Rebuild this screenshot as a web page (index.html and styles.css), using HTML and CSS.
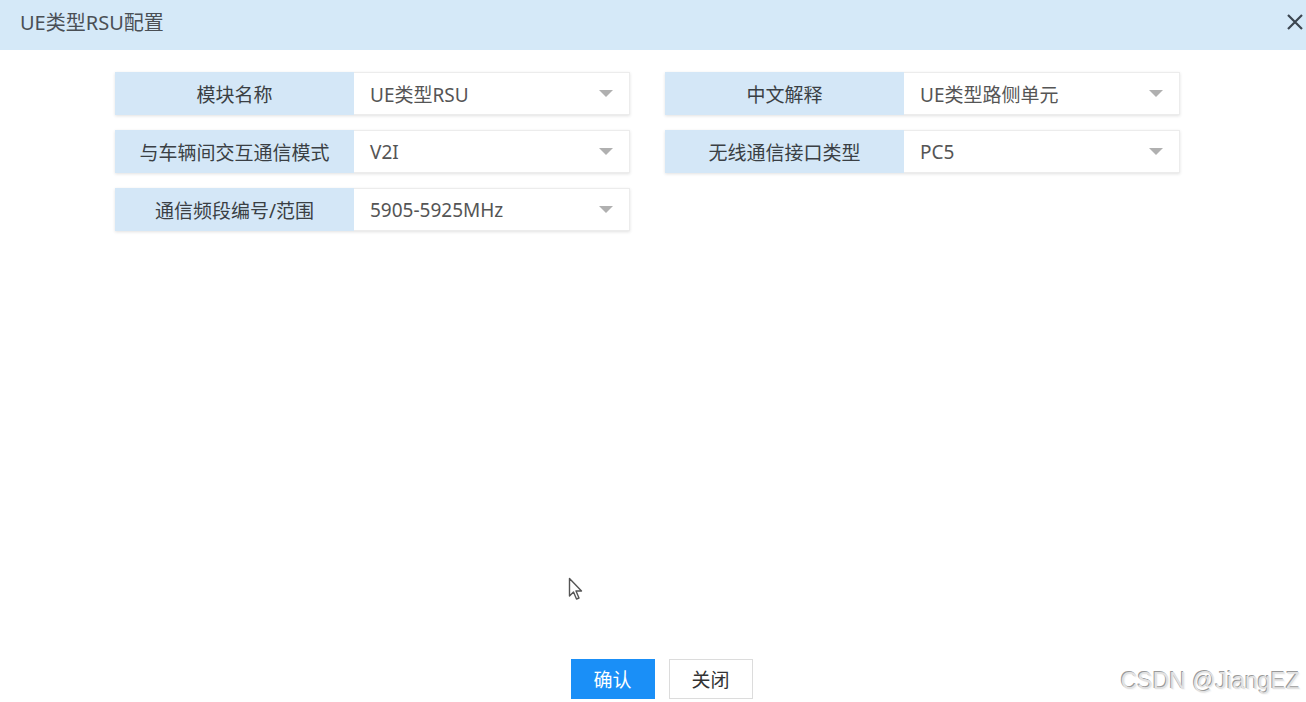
FILE: index.html
```html
<!DOCTYPE html>
<html lang="zh-CN">
<head>
    <meta charset="UTF-8">
    <title>UE类型RSU配置</title>
    <link rel="stylesheet" href="styles.css">
</head>
<body>
    <div class="dialog">
        <div class="dialog-header">
            <span class="dialog-title">UE类型RSU配置</span>
            <span class="dialog-close">
                <svg width="18" height="18" viewBox="0 0 18 18"><path d="M2 2 L16 16 M16 2 L2 16" stroke="#3c4650" stroke-width="2.2" fill="none"/></svg>
            </span>
        </div>

        <div class="dialog-body">
            <div class="form-grid">
                <div class="field">
                    <div class="field-label">模块名称</div>
                    <div class="field-select"><span>UE类型RSU</span><i class="caret"></i></div>
                </div>
                <div class="field">
                    <div class="field-label">中文解释</div>
                    <div class="field-select"><span>UE类型路侧单元</span><i class="caret"></i></div>
                </div>
                <div class="field">
                    <div class="field-label">与车辆间交互通信模式</div>
                    <div class="field-select"><span>V2I</span><i class="caret"></i></div>
                </div>
                <div class="field">
                    <div class="field-label">无线通信接口类型</div>
                    <div class="field-select"><span>PC5</span><i class="caret"></i></div>
                </div>
                <div class="field">
                    <div class="field-label">通信频段编号/范围</div>
                    <div class="field-select"><span>5905-5925MHz</span><i class="caret"></i></div>
                </div>
            </div>
        </div>

        <div class="dialog-footer">
            <button class="btn btn-primary">确认</button>
            <button class="btn">关闭</button>
        </div>
    </div>

    <!-- mouse pointer captured in the screenshot -->
    <svg class="cursor" width="18" height="26" viewBox="0 0 18 26">
        <path d="M1.5 1.5 L1.5 19 L5.5 15 L8.5 22 L11 21 L8 14 L13.5 14 Z" fill="#fff" stroke="#555" stroke-width="1.4" stroke-linejoin="round"/>
    </svg>

    <div class="watermark">CSDN @JiangEZ</div>
</body>
</html>
```

FILE: styles.css
```css
body {
    margin: 0;
    padding: 0;
    background: #ffffff;
    font-family: "Noto Sans", "Noto Sans CJK SC", sans-serif;
    color: #333;
}
.dialog {
    height: 100vh;
    display: flex;
    flex-direction: column;
}
.dialog-header {
    height: 50px;
    flex: none;
    display: flex;
    align-items: center;
    justify-content: space-between;
    padding: 0 0 0 20px;
    background: #d5e9f8;
}
.dialog-title {
    font-size: 20px;
    color: #4a4f55;
    margin-bottom: 8px;
}
.dialog-close {
    display: flex;
    align-items: center;
    width: 20px;
    margin-top: -6px;
}
.dialog-body {
    flex: 1;
    padding: 22px 0 0 115px;
}
.form-grid {
    display: grid;
    grid-template-columns: 515px 515px;
    column-gap: 35px;
    row-gap: 15px;
}
.field {
    display: flex;
    height: 43px;
    box-shadow: 0 1px 3px rgba(0, 0, 0, 0.12);
}
.field-label {
    width: 239px;
    flex: none;
    display: flex;
    align-items: center;
    justify-content: center;
    background: #d4e7f7;
    font-size: 19px;
    color: #3a3f44;
}
.field-select {
    flex: 1;
    display: flex;
    align-items: center;
    justify-content: space-between;
    padding: 0 16px;
    background: #fff;
    border: 1px solid #ececec;
    border-left: none;
    font-size: 19px;
    color: #555;
}
.caret {
    width: 0;
    height: 0;
    border-left: 7px solid transparent;
    border-right: 7px solid transparent;
    border-top: 7px solid #b0b0b0;
}
.dialog-footer {
    flex: none;
    display: flex;
    justify-content: center;
    gap: 14px;
    padding: 0 0 3px 17px;
}
.btn {
    width: 84px;
    height: 40px;
    border: 1px solid #dcdcdc;
    background: #fff;
    color: #333;
    font-family: inherit;
    font-size: 19px;
    cursor: pointer;
}
.btn-primary {
    background: #1a8ff7;
    border-color: #1a8ff7;
    color: #fff;
}
.cursor {
    position: absolute;
    left: 568px;
    top: 577px;
}
.watermark {
    position: absolute;
    right: 6px;
    bottom: 7px;
    font-family: "Liberation Sans", Arial, sans-serif;
    font-size: 23px;
    color: #e2e2e2;
    text-shadow: -1px -1px 0 #9a9a9a, 1px 1px 0 #f8f8f8;
}
```
